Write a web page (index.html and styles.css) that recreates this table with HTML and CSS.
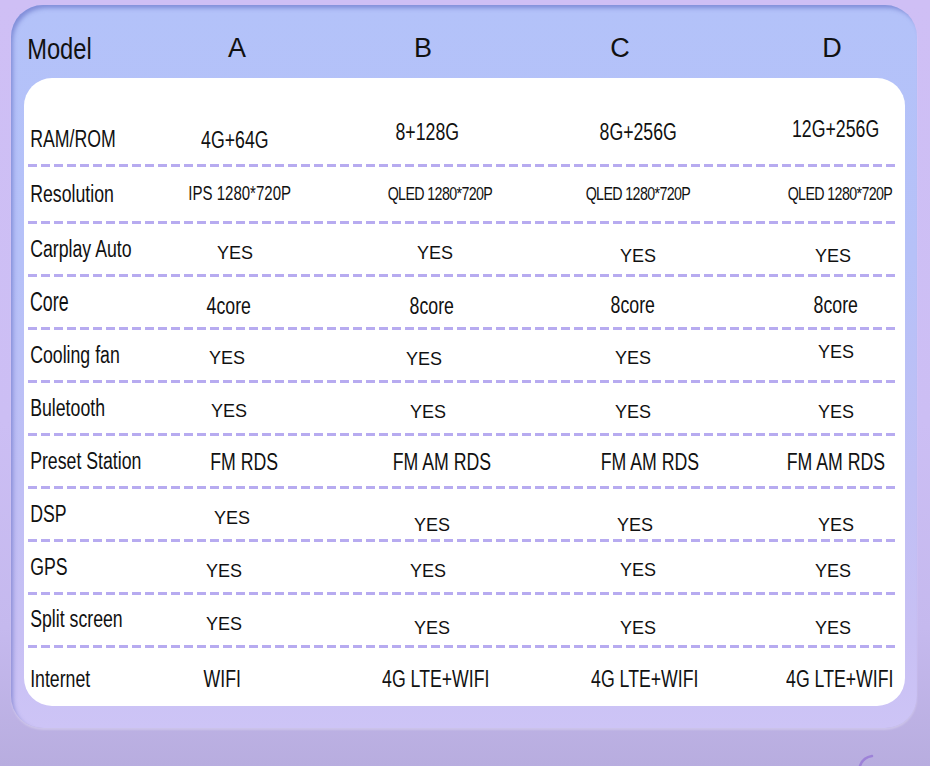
FILE: index.html
```html
<!DOCTYPE html>
<html>
<head>
<meta charset="utf-8">
<title>Model comparison</title>
<link rel="stylesheet" href="styles.css">
</head>
<body>
<div class="panel">
  <div class="head grid">
    <div class="hl">Model</div>
    <div class="hc sr5">A</div>
    <div class="hc sl9">B</div>
    <div class="hc sl18">C</div>
    <div class="hc sl4">D</div>
  </div>
  <div class="card">
    <div class="row row1 grid">
      <div class="lab">RAM/ROM</div>
      <div class="cell sr3 sd1">4G+64G</div>
      <div class="cell sl5 su7">8+128G</div>
      <div class="cell su7">8G+256G</div>
      <div class="cell su10">12G+256G</div>
    </div>
    <div class="sep"></div>
    <div class="row row2 grid">
      <div class="lab">Resolution</div>
      <div class="cell ips sr8">IPS 1280*720P</div>
      <div class="cell qled sr8">QLED 1280*720P</div>
      <div class="cell qled">QLED 1280*720P</div>
      <div class="cell qled sr4">QLED 1280*720P</div>
    </div>
    <div class="sep"></div>
    <div class="row grid">
      <div class="lab">Carplay Auto</div>
      <div class="cell yes sr3 sd4">YES</div>
      <div class="cell yes sr3 sd4">YES</div>
      <div class="cell yes sd7">YES</div>
      <div class="cell yes sl3 sd7">YES</div>
    </div>
    <div class="sep"></div>
    <div class="row grid">
      <div class="lab core">Core</div>
      <div class="cell sl3 sd4">4core</div>
      <div class="cell sd4">8core</div>
      <div class="cell sl5 sd3">8core</div>
      <div class="cell sd3">8core</div>
    </div>
    <div class="sep"></div>
    <div class="row grid">
      <div class="lab">Cooling fan</div>
      <div class="cell yes sl5 sd3">YES</div>
      <div class="cell yes sl8 sd4">YES</div>
      <div class="cell yes sl5 sd3">YES</div>
      <div class="cell yes su3">YES</div>
    </div>
    <div class="sep"></div>
    <div class="row grid">
      <div class="lab">Buletooth</div>
      <div class="cell yes sl3 sd3">YES</div>
      <div class="cell yes sl4 sd4">YES</div>
      <div class="cell yes sl5 sd4">YES</div>
      <div class="cell yes sd4">YES</div>
    </div>
    <div class="sep"></div>
    <div class="row grid">
      <div class="lab">Preset Station</div>
      <div class="cell sr12 sd1">FM RDS</div>
      <div class="cell sr10 sd1">FM AM RDS</div>
      <div class="cell sr12 sd1">FM AM RDS</div>
      <div class="cell sd1">FM AM RDS</div>
    </div>
    <div class="sep"></div>
    <div class="row grid">
      <div class="lab">DSP</div>
      <div class="cell yes sd4">YES</div>
      <div class="cell yes sd11">YES</div>
      <div class="cell yes sl3 sd11">YES</div>
      <div class="cell yes sd11">YES</div>
    </div>
    <div class="sep"></div>
    <div class="row grid">
      <div class="lab">GPS</div>
      <div class="cell yes sl8 sd4">YES</div>
      <div class="cell yes sl4 sd4">YES</div>
      <div class="cell yes sd3">YES</div>
      <div class="cell yes sl3 sd4">YES</div>
    </div>
    <div class="sep"></div>
    <div class="row grid">
      <div class="lab su1">Split screen</div>
      <div class="cell yes sl8 sd4">YES</div>
      <div class="cell yes sd8">YES</div>
      <div class="cell yes sd8">YES</div>
      <div class="cell yes sl3 sd8">YES</div>
    </div>
    <div class="sep"></div>
    <div class="row row11 grid">
      <div class="lab">Internet</div>
      <div class="cell sl10">WIFI</div>
      <div class="cell sr4">4G LTE+WIFI</div>
      <div class="cell sr7">4G LTE+WIFI</div>
      <div class="cell sr4">4G LTE+WIFI</div>
    </div>
  </div>
</div>
<svg class="curl" width="16" height="12" viewBox="0 0 16 12"><path d="M2 12 C4 6 8 3 14 2" fill="none" stroke="#9d82d8" stroke-width="2.5" stroke-linecap="round"/></svg>
</body>
</html>
```

FILE: styles.css
```css
html, body {
  margin: 0;
  padding: 0;
}
body {
  width: 930px;
  height: 766px;
  overflow: hidden;
  position: relative;
  background: linear-gradient(180deg, #cfbff5 0%, #ccbef4 55%, #c5b9ee 82%, #b8addf 100%);
  font-family: "Liberation Sans", Arial, sans-serif;
  color: #111;
}
.panel {
  box-sizing: border-box;
  margin: 5px 0 0 11px;
  width: 906px;
  height: 723px;
  padding: 0 12px 22px 13px;
  border-radius: 32px;
  background: linear-gradient(180deg, #b3c2f9 0%, #b6c1f8 35%, #bfbff5 65%, #c8c0f4 88%, #cdc4f6 100%);
  box-shadow: inset 3px 4px 4px -1px rgba(88, 98, 190, 0.55), 0 2px 2px rgba(255, 255, 255, 0.25);
}
.grid {
  display: grid;
  grid-template-columns: 85px 246px 154px 258px 138px;
  align-items: center;
}
.head {
  box-sizing: border-box;
  height: 73px;
  padding-top: 14px;
}
.hl {
  justify-self: start;
  padding-left: 4px;
  font-size: 30px;
  line-height: 1;
  white-space: nowrap;
  transform: scaleX(0.79);
  transform-origin: left center;
}
.hc {
  justify-self: center;
  font-size: 27px;
  line-height: 1;
}
.card {
  background: #fff;
  height: 628px;
  border-radius: 28px;
  overflow: hidden;
}
.row {
  box-sizing: border-box;
  height: 50px;
}
.row1 {
  height: 86px;
  padding-top: 36px;
}
.row2 {
  height: 54px;
}
.row11 {
  height: 58px;
  padding-top: 4px;
}
.lab {
  justify-self: start;
  padding-left: 8px;
  font-size: 23px;
  line-height: 1;
  white-space: nowrap;
  transform: scaleX(0.77);
  transform-origin: left center;
}
.lab.core {
  font-size: 27px;
  transform: scaleX(0.66);
  padding-left: 9px;
}
.cell {
  justify-self: center;
  font-size: 23px;
  line-height: 1;
  white-space: nowrap;
  transform: scaleX(0.77);
}
.ips {
  font-size: 19.5px;
}
.qled {
  font-size: 18.5px;
  letter-spacing: -0.8px;
}
.cell.yes {
  font-size: 18px;
  transform: none;
}
.sep {
  height: 3px;
  margin: 0 6px 0 4px;
  background: repeating-linear-gradient(90deg, #b7abf0 0 9px, transparent 9px 13px);
}
/* small shifts of individual cells (centered items: margin = 2x shift) */
.sr3 { margin-left: 6px; }
.sr4 { margin-left: 8px; }
.sr5 { margin-left: 10px; }
.sr7 { margin-left: 14px; }
.sr8 { margin-left: 16px; }
.sr10 { margin-left: 20px; }
.sr12 { margin-left: 24px; }
.sl3 { margin-right: 6px; }
.sl4 { margin-right: 8px; }
.sl5 { margin-right: 10px; }
.sl8 { margin-right: 16px; }
.sl9 { margin-right: 18px; }
.sl10 { margin-right: 20px; }
.sl18 { margin-right: 36px; }
.sd1 { margin-top: 2px; }
.sd3 { margin-top: 6px; }
.sd4 { margin-top: 8px; }
.sd7 { margin-top: 14px; }
.sd8 { margin-top: 16px; }
.sd11 { margin-top: 22px; }
.su1 { margin-bottom: 2px; }
.su3 { margin-bottom: 6px; }
.su7 { margin-bottom: 14px; }
.su10 { margin-bottom: 20px; }
.curl {
  position: absolute;
  left: 858px;
  top: 754px;
}
```
